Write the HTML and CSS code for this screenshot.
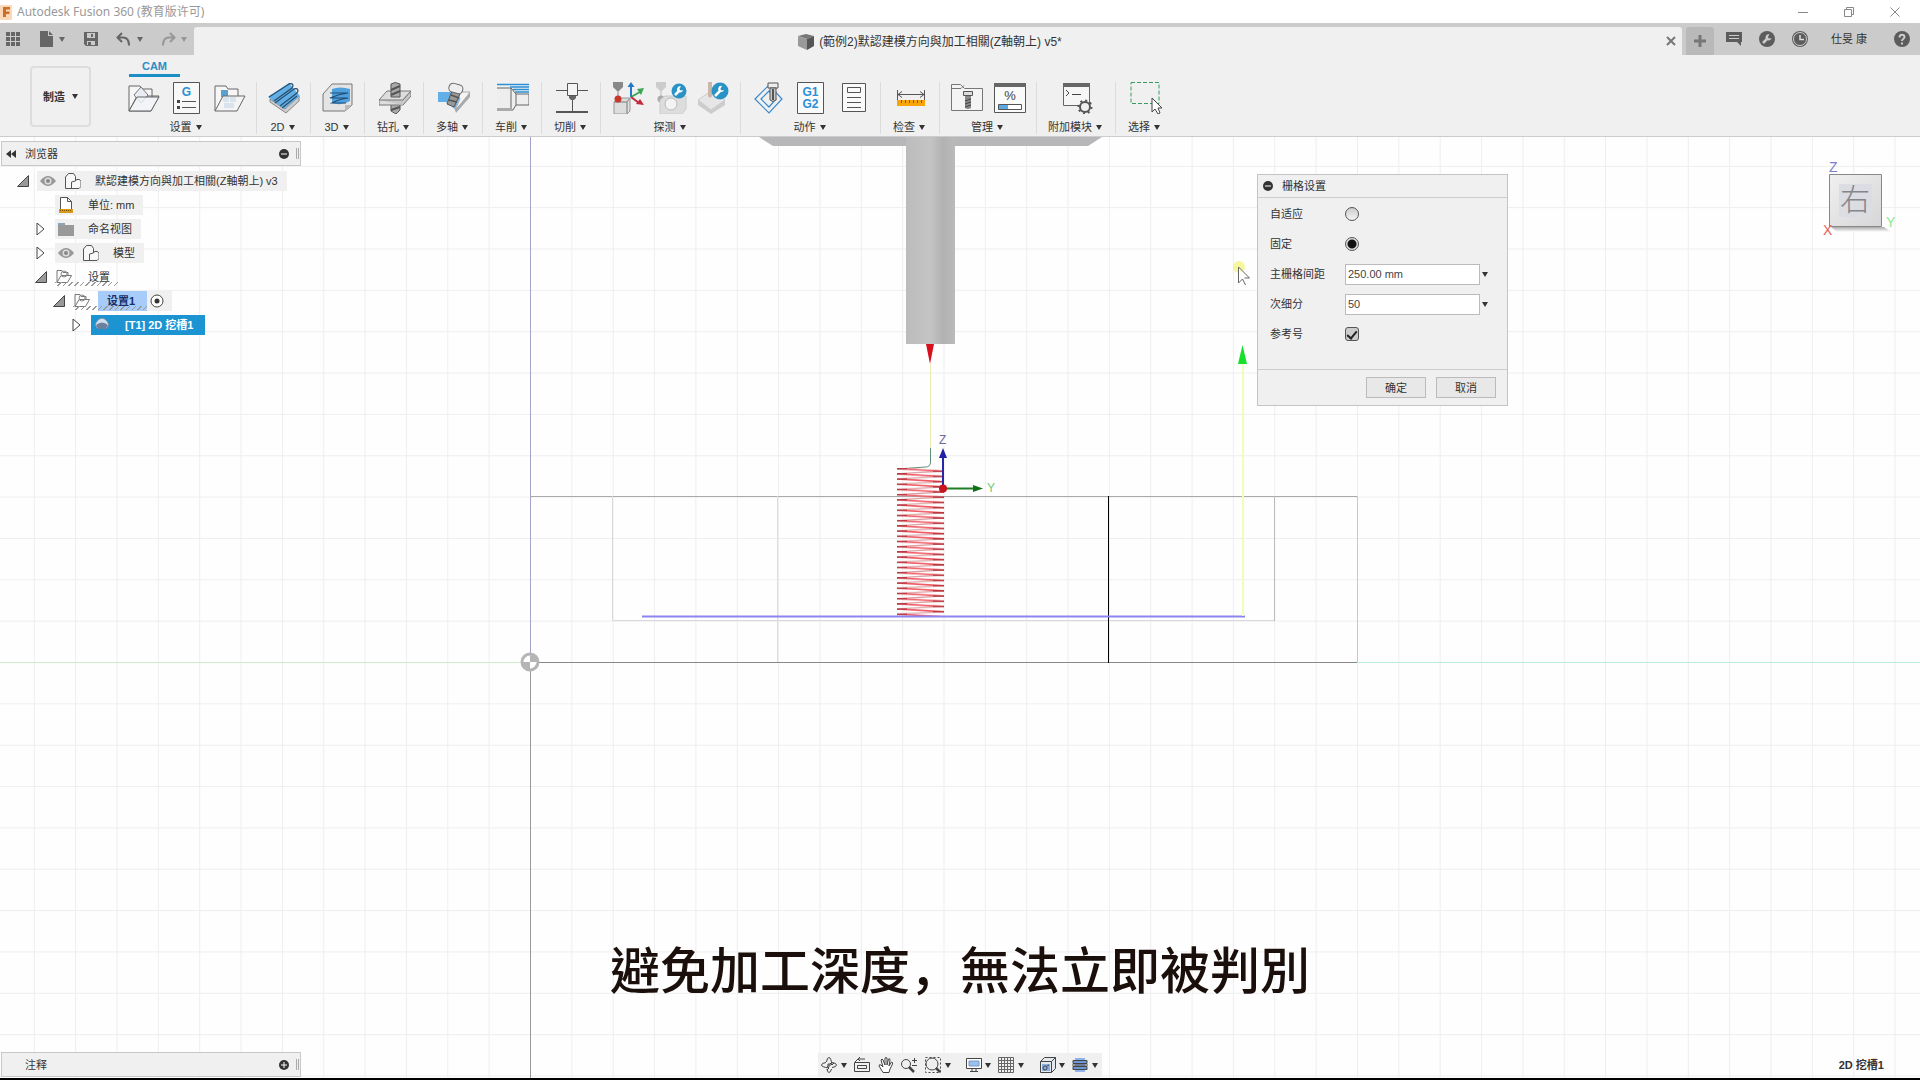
FILE: index.html
```
<!DOCTYPE html>
<html lang="zh-CN">
<head>
    <meta charset="UTF-8">
    <meta name="viewport" content="width=device-width, initial-scale=1.0">
    <title>Autodesk Fusion 360</title>
    <link rel="stylesheet" href="styles.css">
</head>
<body>
    <!-- Window title bar -->
    <header class="title-bar">
        <svg class="app-logo" viewBox="0 0 13 16"><rect width="12" height="15" y="1" rx="1" fill="#fbd9b8"/><path d="M3 13V3h7v2.500H6v2h3.500V10H6v3z" fill="#c8702c"/></svg>
        <span class="app-name">Autodesk Fusion 360 (教育版许可)</span>
        <div class="window-buttons">
            <button aria-label="Minimize"><svg viewBox="0 0 12 12"><path d="M1 6.500h10"/></svg></button>
            <button aria-label="Restore"><svg viewBox="0 0 12 12"><path d="M1.500 3.500h7v7h-7zM3.500 3.500v-2h7v7h-2"/></svg></button>
            <button aria-label="Close"><svg viewBox="0 0 12 12"><path d="M1.500 1.500l9 9M10.500 1.500l-9 9"/></svg></button>
        </div>
    </header>

    <!-- Quick access and document tab -->
    <div class="tab-bar">
        <div class="quick-access">
            <button aria-label="Data panel"><svg viewBox="0 0 16 16"><path d="M1 1h4v4H1zM6 1h4v4H6zM11 1h4v4h-4zM1 6h4v4H1zM6 6h4v4H6zM11 6h4v4h-4zM1 11h4v4H1zM6 11h4v4H6zM11 11h4v4h-4z"/></svg></button>
            <button aria-label="File"><svg viewBox="0 0 16 16"><path d="M2 0h8v5h5v11H2zM11 0l4 4h-4z"/></svg><i class="caret"></i></button>
            <button aria-label="Save"><svg viewBox="0 0 16 16"><path d="M1 1h14v14H3l-2-2zM4 2v5h8V2zM4 10v4h8v-4z" fill-rule="evenodd"/><path d="M8 3h2v3H8zM5 11h3v3H5z"/></svg></button>
            <button aria-label="Undo"><svg viewBox="0 0 16 16"><path d="M6 2L1.500 6.500 6 11M2 6.500h5q6 0 6 8" class="arrow"/></svg><i class="caret"></i></button>
            <button class="dim" aria-label="Redo"><svg viewBox="0 0 16 16"><path d="M10 2l4.500 4.500L10 11M14 6.500H9q-6 0-6 8" class="arrow"/></svg><i class="caret"></i></button>
        </div>
        <div class="doc-tab">
            <div class="doc-title">
                <svg viewBox="0 0 16 16"><path d="M0 2l8-2 8 2-7 3z" fill="#777"/><path d="M0 2l9 3v11l-9-4z" fill="#999"/><path d="M9 5l7-3v10l-7 4z" fill="#555"/></svg>
                <span>(範例2)默認建模方向與加工相關(Z軸朝上) v5*</span>
            </div>
            <button class="doc-close" aria-label="Close document"><svg viewBox="0 0 10 10"><path d="M1 1l8 8M9 1L1 9"/></svg></button>
        </div>
        <button class="new-tab" aria-label="New tab"><svg viewBox="0 0 14 14"><path d="M7 1v12M1 7h12"/></svg></button>
        <div class="account">
            <button aria-label="Comments"><svg viewBox="0 0 16 16"><path d="M0 1h16v10h-1v4l-4-4H0z"/><path d="M3 4.500h10M3 7.500h10" stroke="#ccc"/></svg></button>
            <button aria-label="Extensions"><svg viewBox="0 0 16 16"><circle cx="8" cy="8" r="8"/><path d="M4 12l4.500-4.500" stroke="#ccc" stroke-width="2.500"/><path d="M10.500 3.500a3 3 0 1 0 2 3.500L10 7.500 8.800 6z" fill="#ccc"/></svg></button>
            <button aria-label="Job status"><svg viewBox="0 0 16 16"><circle cx="8" cy="8" r="8"/><circle cx="8" cy="8" r="6.500" fill="none" stroke="#ccc"/><path d="M8 4v4.500h4" stroke="#ddd" stroke-width="1.500" fill="none"/></svg></button>
            <a class="user" href="#">仕旻 康</a>
            <button aria-label="Help"><svg viewBox="0 0 16 16"><circle cx="8" cy="8" r="8"/><path d="M5.500 6.500c0-4 5-3.500 5-.500 0 2-2.500 1.500-2.500 4M8 11.500v2" stroke="#ccc" stroke-width="2" fill="none"/></svg></button>
        </div>
    </div>

    <!-- Ribbon -->
    <div class="ribbon">
        <button class="workspace">制造<i class="caret"></i></button>
        <div class="ribbon-main">
            <a class="ribbon-tab" href="#">CAM</a>
            <div class="groups">
                <div class="group">
                    <div class="icons">
                        <svg viewBox="0 0 32 32"><path d="M1 29V4h11l2 3h10v8M1 29L9 14h22l-8 15z" fill="#f6f6f6" stroke="#666"/><path d="M6 13l7-8 7 8-7 8z" fill="#e9eef4" stroke="#777"/><path d="M1 29L9 15h22l-8 14z" fill="#f1f4f8cc" stroke="#666"/></svg>
                        <svg viewBox="0 0 32 32"><path d="M2.500.500h26v31h-26z" fill="#f8f8f8" stroke="#555"/><text x="15.500" y="14" class="g-code">G</text><path d="M11 19.500h14M11 25.500h14" stroke="#555"/><path d="M6 18h3v3H6zM6 24h3v3H6z" fill="#444"/></svg>
                        <svg viewBox="0 0 32 32"><path d="M1 29V4h11l2 3h10v8" fill="#f6f6f6" stroke="#666"/><path d="M7 8h7v7H7z" fill="#5b9fce"/><path d="M1 29L9 14h22l-8 15z" fill="#f4f4f4" stroke="#666"/><path d="M9 15h6v5H9zM16 15h6v5h-6zM10 21h10v5H10z" fill="#d8e3ee"/></svg>
                    </div>
                    <button class="group-label">设置<i class="caret"></i></button>
                </div>
                <div class="group narrow">
                    <div class="icons">
                        <svg viewBox="0 0 32 32"><path d="M2 20l16 11 13-12V14L17 27 2 17z" fill="#ccc" stroke="#888"/><path d="M0 15L21 1l11 13-16 13z" fill="#62aee6"/><path d="M1 15L21 2c4-1 5 1 3 4L6 19M7 21L26 7c4-1 5 1 3 4L12 24M14 26l15-12" fill="none" stroke="#27506f" stroke-width="1.300"/></svg>
                    </div>
                    <button class="group-label">2D<i class="caret"></i></button>
                </div>
                <div class="group narrow">
                    <div class="icons">
                        <svg viewBox="0 0 32 32"><path d="M1 29V12L10 2h20v21l-7 6z" fill="#e4e4e4" stroke="#777"/><path d="M10 7q8-3 18 0v12q-8 5-18 2z" fill="#4e9fdc"/><path d="M8 11h18q-9 1-18 5h18q-9 1-16 5h14" fill="none" stroke="#1f4f76" stroke-width="1.200"/><path d="M23 29v-6h7" fill="#bbb"/></svg>
                    </div>
                    <button class="group-label">3D<i class="caret"></i></button>
                </div>
                <div class="group">
                    <div class="icons">
                        <svg viewBox="0 0 32 32"><path d="M12 20h9v8l-4 4-5-3z" fill="#aaa" stroke="#555"/><path d="M0 18L8 9h24l-8 9v5H0z" fill="#ddd" stroke="#777"/><path d="M0 18h24L32 9v5l-8 9" fill="#c8c8c8" stroke="#777"/><path d="M12 2q4-3 9 0v13h-9z" fill="#aaa" stroke="#555"/><path d="M12 8l9-4M12 13l9-4M12 28l9-3" stroke="#555" stroke-width="2"/></svg>
                    </div>
                    <button class="group-label">钻孔<i class="caret"></i></button>
                </div>
                <div class="group">
                    <div class="icons">
                        <svg viewBox="0 0 32 32"><path d="M0 10h12l10 6-5 11-9-7H0z" fill="#62aee6"/><path d="M20 12l2-2h10l-4 7-11 11 5-11z" fill="#f4f4f4" stroke="#aaa"/><path d="M17 28l15-18v5L18 31z" fill="#aaa"/><path d="M14 9l8 3-6 13-7-3z" fill="#999" stroke="#555"/><path d="M11 18l8 2M13 13l8 3" stroke="#555" stroke-width="1.500"/><rect x="11" y="2" width="14" height="9" rx="4" transform="rotate(15 18 6)" fill="#eee" stroke="#666"/></svg>
                    </div>
                    <button class="group-label">多轴<i class="caret"></i></button>
                </div>
                <div class="group">
                    <div class="icons">
                        <svg viewBox="0 0 32 32"><path d="M0 6h14l5 6h13v11H19l-3 5H0z" fill="#eee"/><path d="M0 6h14l5 6v11l-3 5M14 6v22M19 12h13v11H19M0 28h16" fill="none" stroke="#666"/><path d="M0 27h15" stroke="#aaa" stroke-width="2"/><path d="M0 2.500h32M13 5h19M16 7.500h16M18 10h14" stroke="#2a8fd6" stroke-width="1.500"/></svg>
                    </div>
                    <button class="group-label">车削<i class="caret"></i></button>
                </div>
                <div class="group">
                    <div class="icons">
                        <svg viewBox="0 0 32 32"><path d="M0 8.500h32M16.500 17v12" stroke="#555"/><path d="M11.500 1.500h10v12h-10z" fill="#f4f4f4" stroke="#555"/><path d="M13 14h7v2l-2 2h-3l-2-2z" fill="#666"/><path d="M0 30h32" stroke="#555" stroke-width="2"/></svg>
                    </div>
                    <button class="group-label">切削<i class="caret"></i></button>
                </div>
                <div class="group">
                    <div class="icons">
                        <svg viewBox="0 0 32 32"><path d="M1 0h10v5L7 9H5L1 5z" fill="#888"/><path d="M6 9v8" stroke="#888"/><path d="M2 20h13v12H2zM2 20l4-4h12l-3 4zM15 20l3-4v13l-3 3z" fill="#ddd" stroke="#999"/><circle cx="6" cy="17" r="3.500" fill="#c8372b"/><path d="M19 15V4" stroke="#2179c8" stroke-width="2"/><path d="M15.500 5L19 0l3.500 5z" fill="#2179c8"/><path d="M19 15l9-5" stroke="#3aa655" stroke-width="2"/><path d="M25 7l7-1-3 7z" fill="#3aa655"/><path d="M19 15l8 6" stroke="#c6283c" stroke-width="2"/><path d="M28 17l4 6-8-1z" fill="#c6283c"/></svg>
                        <svg viewBox="0 0 32 32"><path d="M1 0h10v5L7 9H5L1 5z" fill="#ccc"/><path d="M6 9v8" stroke="#bbb"/><circle cx="6" cy="17" r="3.500" fill="#aaa"/><path d="M5 18l5-4h21v13l-4 5H5z" fill="#ddd" stroke="#ccc"/><circle cx="16" cy="22" r="6" fill="#f3f3f3" stroke="#bbb"/><circle cx="24" cy="9" r="7.500" fill="#2a93c6"/><path d="M20 13l4-4" stroke="#fff" stroke-width="2.500"/><path d="M26 4.500a3 3 0 1 0 2 3.500l-2.500.500-1.200-1.500z" fill="#fff"/></svg>
                        <svg viewBox="0 0 32 32"><path d="M0 18l13-9 14 9-14 10z" fill="#e6e6e6" stroke="#ccc"/><path d="M0 18v5l13 9 14-9v-5L13 28z" fill="#ccc"/><path d="M10 0v14q2 3 4 0V0" fill="#ccb6aa"/><circle cx="22" cy="9" r="8.500" fill="#2a93c6"/><path d="M17 14l5-5" stroke="#fff" stroke-width="2.500"/><path d="M24 4a3 3 0 1 0 2 4l-2.500.500L22.300 7z" fill="#fff"/></svg>
                    </div>
                    <button class="group-label">探测<i class="caret"></i></button>
                </div>
                <div class="group">
                    <div class="icons">
                        <svg viewBox="0 0 32 32"><path d="M3 17L17 3l13 14-13 14zM9 17l8-8 7 8-7 8z" fill="none" stroke="#3c88c8" stroke-width="1.200"/><path d="M16 1h10v5H16z" fill="#eee" stroke="#555" /><path d="M18 6h6v12q-3 3-6 0z" fill="#ccc" stroke="#555"/><path d="M21 7v11" stroke="#555" stroke-width="2"/></svg>
                        <svg viewBox="0 0 32 32"><path d="M2.500.500h26v31h-26z" fill="#fafafa" stroke="#555"/><text x="15.500" y="14" class="g-code">G1</text><text x="15.500" y="26" class="g-code">G2</text></svg>
                        <svg viewBox="0 0 32 32"><path d="M4.500 1.500h23v28h-23z" fill="#fafafa" stroke="#555"/><path d="M9.500 5.500h13v5h-13zM9 15.500h14M9 20.500h14M9 25.500h14" fill="none" stroke="#555"/></svg>
                    </div>
                    <button class="group-label">动作<i class="caret"></i></button>
                </div>
                <div class="group">
                    <div class="icons">
                        <svg viewBox="0 0 32 32"><path d="M2.500 8v10M29.500 8v10M3 12.500h26M7 9.500l-4 3 4 3M25 9.500l4 3-4 3" fill="none" stroke="#555"/><path d="M2 18h28v6H2z" fill="#f6a50c"/><path d="M6.500 18v3M10.500 18v3M14.500 18v3M18.500 18v3M22.500 18v3M26.500 18v3" stroke="#8a5c00"/></svg>
                    </div>
                    <button class="group-label">检查<i class="caret"></i></button>
                </div>
                <div class="group">
                    <div class="icons">
                        <svg viewBox="0 0 32 32"><path d="M.500 28.500v-26h9l4 4h18v22z" fill="#f4f4f4" stroke="#777"/><path d="M0 6.500h10l3-3" fill="none" stroke="#777"/><path d="M12.500 9.500h9v4h-9z" fill="#ddd" stroke="#555"/><path d="M14 14h6v12q-3 2-6 0z" fill="#888"/><path d="M14 19l6-2M14 22l6-2M14 25l6-2" stroke="#444"/></svg>
                        <svg viewBox="0 0 32 32"><path d="M.500 1.500h31v29H.500z" fill="#fafafa" stroke="#555"/><path d="M0 1h32v4H0z" fill="#666"/><text x="16" y="18" class="percent">%</text><path d="M4.500 22.500h23v5h-23z" fill="#fff" stroke="#555"/><path d="M5 23h9v4H5z" fill="#5aa9e2"/></svg>
                    </div>
                    <button class="group-label">管理<i class="caret"></i></button>
                </div>
                <div class="group">
                    <div class="icons">
                        <svg viewBox="0 0 32 32"><path d="M2.500 2.500h26v21h-26z" fill="#f6f6f6" stroke="#666"/><path d="M2 1h27v4H2z" fill="#666"/><path d="M5 8l3 3-3 3M11 12.500h9" fill="none" stroke="#444"/><circle cx="24" cy="25" r="5" fill="#f0f0f0" stroke="#555" stroke-width="2"/><circle cx="24" cy="25" r="6.500" fill="none" stroke="#555" stroke-width="2" stroke-dasharray="2 3"/></svg>
                    </div>
                    <button class="group-label">附加模块<i class="caret"></i></button>
                </div>
                <div class="group">
                    <div class="icons">
                        <svg viewBox="0 0 32 32"><path d="M1 .500h28v21H1z" fill="none" stroke="#3a9c62" stroke-dasharray="4 2"/><path d="M22 16v14l3-3 3 5 2-1-2-5h4z" fill="#fff" stroke="#444"/></svg>
                    </div>
                    <button class="group-label">选择<i class="caret"></i></button>
                </div>
            </div>
        </div>
    </div>

    <!-- Modelling viewport -->
    <main class="viewport">
        <svg class="scene" viewBox="0 137 1920 941" preserveAspectRatio="xMidYMin slice">
            <defs>
                <pattern id="grid" x="530" y="662" width="41.350" height="41.350" patternUnits="userSpaceOnUse">
                    <path d="M0 .500h42M.500 0v42" stroke="#eee"/>
                </pattern>
                <pattern id="helix" x="897" y="467" width="47" height="5.200" patternUnits="userSpaceOnUse">
                    <path d="M47 4.200L0 6.800M47 -1L0 1.600" stroke="#d89a9e" stroke-width="1.200"/>
                    <path d="M0 1.600L47 4.200" stroke="#f05560" stroke-width="1.600"/>
                    <path d="M0 1.600h10M36 4.200h11" stroke="#b83a42" stroke-width="1.500"/>
                </pattern>
                <linearGradient id="shaft">
                    <stop offset="0" stop-color="#bcbcbc"/>
                    <stop offset=".5" stop-color="#c4c4c4"/>
                    <stop offset=".75" stop-color="#b2b2b2"/>
                    <stop offset="1" stop-color="#bababa"/>
                </linearGradient>
            </defs>
            <rect y="137" width="1920" height="941" fill="url(#grid)"/>

            <!-- World axes -->
            <path d="M0 662.500h530" stroke="#cdeccd"/>
            <path d="M1357 662.500h563" stroke="#b8ecd8"/>
            <path d="M530.500 137v525" stroke="#a3a3cc"/>
            <path d="M530.500 662v416" stroke="#999"/>

            <!-- Stock and part outline -->
            <path d="M530 496.500h827" stroke="#aaa"/>
            <path d="M530 662.500h827" stroke="#888"/>
            <path d="M612.500 496v124.500h661.500" fill="none" stroke="#d9d9d9"/>
            <path d="M777.500 496v166" stroke="#dcdcdc"/>
            <path d="M1274.500 496v125" stroke="#bbb"/>
            <path d="M1357.500 496v166" stroke="#c8c8c8"/>
            <path d="M1108.500 496v167" stroke="#000"/>

            <!-- Tool holder and cutter -->
            <path d="M759 137h343l-14 9H773z" fill="#b7b7b9"/>
            <path d="M906 137h49v207h-49z" fill="url(#shaft)"/>
            <path d="M926 344h8l-4 20z" fill="#d80f1c"/>

            <!-- Toolpath -->
            <path d="M930.500 364v84" stroke="#e9edb4"/>
            <path d="M930.500 448v14q0 5-5 5l-28 2" fill="none" stroke="#5f8f78"/>
            <rect x="897" y="468" width="47" height="148" fill="url(#helix)"/>
            <path d="M642 616.500h603" stroke="#8c84f0" stroke-width="2"/>
            <path d="M1243 364v252" stroke="#f0ffb8" stroke-width="2"/>
            <path d="M1238 364l4.500-19 4.500 19z" fill="#16e02c"/>

            <!-- Setup origin -->
            <path d="M943 488v-34" stroke="#2a26a8" stroke-width="2"/>
            <path d="M939 458l4-10 4 10z" fill="#2320a8"/>
            <path d="M943 488.500h32" stroke="#1f7d22" stroke-width="2"/>
            <path d="M973 485l10 3.500-10 3.500z" fill="#127016"/>
            <circle cx="943" cy="488.500" r="4" fill="#c8141e"/>
            <text x="939" y="444" class="axis-z">Z</text>
            <text x="987" y="492" class="axis-y">Y</text>

            <!-- World origin -->
            <circle cx="530" cy="662" r="8" fill="#fff" stroke="#b5b5b5" stroke-width="3"/>
            <path d="M530 655v7h7a7 7 0 0 0-7-7zM530 669v-7h-7a7 7 0 0 0 7 7z" fill="#b5b5b5"/>

            <!-- Mouse pointer -->
            <circle cx="1239" cy="267" r="6" fill="#eef03a" opacity=".5"/>
            <path d="M1238.500 267v16l4-4 3 6M1238.500 267l11 11h-5" fill="#fff" stroke="#666"/>
        </svg>

        <!-- Browser panel -->
        <section class="browser">
            <div class="panel-bar">
                <svg class="collapse" viewBox="0 0 10 8"><path d="M5 0v8L0 4zM10 0v8L5 4z" fill="#333"/></svg>
                <span class="panel-name">浏览器</span>
                <button class="round" aria-label="Hide browser"><svg viewBox="0 0 10 10"><circle cx="5" cy="5" r="5"/><path d="M2 5h6"/></svg></button>
                <i class="grip"></i>
            </div>
            <ul class="tree">
                <li class="level-0">
                    <svg class="twist" viewBox="0 0 12 12"><path d="M11.500.500v11H.500z" fill="#999" stroke="#444"/></svg>
                    <div class="node">
                        <svg class="eye" viewBox="0 0 16 16"><path d="M0 8q8-10 16 0-8 10-16 0z" fill="#999"/><circle cx="8" cy="8" r="3.500" fill="#ddd"/><circle cx="8" cy="8" r="2" fill="#888"/></svg>
                        <svg viewBox="0 0 16 16"><path d="M.500 15.500V4l3-3.500h5l2 3V8l1-1.500h3l1.500 2v5l-2 2zM6.500 15V9l4-1" fill="#f8f8f8" stroke="#555"/></svg>
                        <span>默認建模方向與加工相關(Z軸朝上) v3</span>
                    </div>
                </li>
                <li class="level-1">
                    <i class="twist"></i>
                    <div class="node">
                        <svg viewBox="0 0 16 16"><path d="M2.500 12V.500h7l4 4V12" fill="#fff" stroke="#555"/><path d="M9.500.500v4h4" fill="none" stroke="#555"/><path d="M1 12h14v4H1z" fill="#d99a1c"/><path d="M2 13.500h12" stroke="#7a5300" stroke-dasharray="1 1"/></svg>
                        <span>单位: mm</span>
                    </div>
                </li>
                <li class="level-1">
                    <svg class="twist" viewBox="0 0 12 12"><path d="M2 0l7 6-7 6z" fill="#fff" stroke="#444"/></svg>
                    <div class="node">
                        <svg viewBox="0 0 16 16"><path d="M0 4h16v11H0z" fill="#999"/><path d="M0 2h7v2H0z" fill="#8fa3b8"/></svg>
                        <span>命名视图</span>
                    </div>
                </li>
                <li class="level-1">
                    <svg class="twist" viewBox="0 0 12 12"><path d="M2 0l7 6-7 6z" fill="#fff" stroke="#444"/></svg>
                    <div class="node">
                        <svg class="eye" viewBox="0 0 16 16"><path d="M0 8q8-10 16 0-8 10-16 0z" fill="#999"/><circle cx="8" cy="8" r="3.500" fill="#ddd"/><circle cx="8" cy="8" r="2" fill="#888"/></svg>
                        <svg viewBox="0 0 16 16"><path d="M.500 15.500V4l3-3.500h5l2 3V8l1-1.500h3l1.500 2v5l-2 2zM6.500 15V9l4-1" fill="#f8f8f8" stroke="#555"/></svg>
                        <span>模型</span>
                    </div>
                </li>
                <li class="level-1">
                    <svg class="twist" viewBox="0 0 12 12"><path d="M11.500.500v11H.500z" fill="#999" stroke="#444"/></svg>
                    <div class="node hatched">
                        <svg viewBox="0 0 16 16"><path d="M1 13.500V1.500h5l1 2h5v3M1 13.500l4-7h10.500l-4 7z" fill="none" stroke="#777"/><circle cx="8" cy="5" r="3" fill="none" stroke="#888"/></svg>
                        <span>设置</span>
                    </div>
                </li>
                <li class="level-2">
                    <svg class="twist" viewBox="0 0 12 12"><path d="M11.500.500v11H.500z" fill="#999" stroke="#444"/></svg>
                    <div class="node hatched setup">
                        <svg viewBox="0 0 16 16"><path d="M1 13.500V1.500h5l1 2h5v3M1 13.500l4-7h10.500l-4 7z" fill="none" stroke="#777"/><circle cx="8" cy="5" r="3" fill="none" stroke="#888"/></svg>
                        <span>设置1</span>
                    </div>
                    <div class="node active-mark">
                        <svg viewBox="0 0 16 16"><circle cx="8" cy="8" r="6" fill="#fff" stroke="#444"/><circle cx="8" cy="8" r="2.500" fill="#333"/></svg>
                    </div>
                </li>
                <li class="level-3">
                    <svg class="twist" viewBox="0 0 12 12"><path d="M2 0l7 6-7 6z" fill="#fff" stroke="#444"/></svg>
                    <div class="node selected">
                        <svg viewBox="0 0 16 16"><path d="M1 8q2-6 7-7 5 1 7 7l-3 4q-4-3-8 0z" fill="#cfe0ee" stroke="#6b8aa8"/><path d="M2 8q6-5 12 0l-3 5q-3-3-6 0z" fill="#6c7f9c"/></svg>
                        <span>[T1] 2D 挖槽1</span>
                    </div>
                </li>
            </ul>
        </section>

        <!-- Grid settings dialog -->
        <form class="dialog">
            <div class="dialog-head">
                <svg class="round" viewBox="0 0 10 10"><circle cx="5" cy="5" r="5"/><path d="M2 5h6"/></svg>
                <span>栅格设置</span>
            </div>
            <div class="dialog-body">
                <div class="field">
                    <label for="adaptive">自适应</label>
                    <input type="radio" name="mode" id="adaptive">
                </div>
                <div class="field">
                    <label for="fixed">固定</label>
                    <input type="radio" name="mode" id="fixed" checked>
                </div>
                <div class="field">
                    <label for="spacing">主栅格间距</label>
                    <input type="text" id="spacing" value="250.00 mm">
                    <button type="button" aria-label="Spacing values"><i class="caret"></i></button>
                </div>
                <div class="field">
                    <label for="subdivisions">次细分</label>
                    <input type="text" id="subdivisions" value="50">
                    <button type="button" aria-label="Subdivision values"><i class="caret"></i></button>
                </div>
                <div class="field">
                    <label for="numbers">参考号</label>
                    <input type="checkbox" id="numbers" checked>
                </div>
            </div>
            <div class="dialog-foot">
                <button type="button">确定</button>
                <button type="button">取消</button>
            </div>
        </form>

        <!-- View cube -->
        <div class="view-cube">
            <svg viewBox="0 0 76 80">
                <defs>
                    <linearGradient id="shade" x2="0" y2="1">
                        <stop offset="0" stop-color="#aaa"/>
                        <stop offset="1" stop-color="#fff"/>
                    </linearGradient>
                    <linearGradient id="face" x2="1" y2="1">
                        <stop offset="0" stop-color="#f0f0f0"/>
                        <stop offset="1" stop-color="#d6d6d8"/>
                    </linearGradient>
                </defs>
                <path d="M8 67h53l7 5H14z" fill="url(#shade)"/>
                <path d="M6.500 14.500h52v52h-52z" fill="url(#face)" stroke="#888"/>
                <path d="M16 24h33v33H16z" fill="#dcdde2"/>
                <text x="32" y="50" class="face-name">右</text>
                <text x="6" y="12" class="cube-z">Z</text>
                <text x="0" y="75" class="cube-x">X</text>
                <text x="63" y="67" class="cube-y">Y</text>
            </svg>
        </div>

        <p class="caption" lang="zh-TW">避免加工深度<span class="comma" lang="zh-CN">，</span>無法立即被判別</p>

        <!-- Comments panel -->
        <section class="comments panel-bar">
            <span class="panel-name">注释</span>
            <button class="round" aria-label="Show comments"><svg viewBox="0 0 10 10"><circle cx="5" cy="5" r="5"/><path d="M2 5h6M5 2v6"/></svg></button>
            <i class="grip"></i>
        </section>

        <!-- Navigation bar -->
        <nav class="nav-bar">
            <button aria-label="Orbit"><svg viewBox="0 0 16 16"><path d="M5 5.500Q.500 6 .500 8T8 11l-2-2M8 11l-2 2M11 10.500q4.500-.500 4.500-2.500T11 5.500M5.500 5Q6 .500 8 .500T11 8l-2-2M11 8l2-2M6 12q.500 3.500 2 3.500t2.500-3.500M8 6v4M6 8h4"/></svg><i class="caret"></i></button>
            <button aria-label="Look at"><svg viewBox="0 0 16 16"><path d="M.500 5.500h15v9H.500zM3.500 8.500h9v3h-9zM1 5l3-3h7M4 2l2-2M4 2l2 2"/></svg></button>
            <button aria-label="Pan"><svg viewBox="0 0 16 16"><path d="M5 15.500L1 9q0-2 2-1l2 2L3 3q1-2 2 0l2 5V1q1-1 2 0v7l1.500-6q1.500-1 1.500 1l-1 6 2.500-4q1.500 0 1 2L12 12l-1 3.500z" fill="#fff"/></svg></button>
            <button aria-label="Zoom"><svg viewBox="0 0 16 16"><circle cx="5" cy="7" r="4.500"/><path d="M8 10l5 5" stroke-width="2.500"/><path d="M11 3.500h5M13.500 1v5M11 8.500h5"/></svg></button>
            <button aria-label="Fit"><svg viewBox="0 0 16 16"><path d="M.500.500h15v15H.500z" stroke-dasharray="2 2"/><circle cx="7" cy="7" r="6" fill="#eee"/><path d="M11 11l4 4" stroke-width="2.500"/></svg><i class="caret"></i></button>
            <button class="gap" aria-label="Display settings"><svg viewBox="0 0 16 16"><path d="M.500 1.500h15v10H.500z" fill="#fff"/><path d="M3 4h10v5H3z" fill="#9cc0ee" stroke="#7799c8"/><path d="M6 12v2.500M10 12v2.500M4 14.500h8"/></svg><i class="caret"></i></button>
            <button aria-label="Grid and snaps"><svg viewBox="0 0 16 16"><path d="M.500.500h15v15H.500zM3.500 0v16M6.500 0v16M9.500 0v16M12.500 0v16M0 3.500h16M0 6.500h16M0 9.500h16M0 12.500h16" stroke="#666"/></svg><i class="caret"></i></button>
            <button class="gap" aria-label="Viewports"><svg viewBox="0 0 16 16"><path d="M.500 4.500l4-4h11v11l-4 4H.500z" fill="#e4e9f0"/><path d="M.500 4.500h11v11M11.500 4.500l4-4"/><path d="M2 7h8v7H2z" fill="#8aaede" stroke="none"/><circle cx="5" cy="11" r="2"/><path d="M7 9l2-1"/></svg><i class="caret"></i></button>
            <button aria-label="Sections"><svg viewBox="0 0 16 16"><path d="M3 1h10v14H3z" fill="#8fb4ea" stroke="none"/><path d="M1 3.500h14v3H1zM1 9.500h14v3H1z" fill="#6d97d6"/><path d="M0 8h16"/></svg><i class="caret"></i></button>
        </nav>

        <span class="status">2D 挖槽1</span>
    </main>
</body>
</html>
```
FILE: styles.css
```
/* General styles */
* {
    box-sizing: border-box;
}

body {
    margin: 0;
    height: 100vh;
    display: flex;
    flex-direction: column;
    overflow: hidden;
    background: #000;
    color: #333;
    font-family: "Liberation Sans", "Noto Sans CJK SC", sans-serif;
    font-size: 11px;
    line-height: 16px;
}

button {
    display: flex;
    align-items: center;
    padding: 0;
    border: none;
    background: none;
    color: inherit;
    font: inherit;
}

svg {
    display: block;
    flex: none;
}

a {
    color: inherit;
    text-decoration: none;
}

.caret {
    flex: none;
    border: 3px solid transparent;
    border-top: 5px solid #333;
    border-bottom: none;
}

/* Title bar */
.title-bar {
    flex: none;
    height: 23px;
    display: flex;
    align-items: center;
    background: #fff;
    color: #999;
}

.app-logo {
    width: 13px;
    height: 16px;
}

.app-name {
    margin-left: 4px;
    font-family: "Noto Sans", "Noto Sans CJK SC", sans-serif;
    font-size: 12px;
}

.window-buttons {
    display: flex;
    gap: 34px;
    margin-left: auto;
    padding-right: 19px;
}

.window-buttons svg {
    width: 12px;
    height: 12px;
    fill: none;
    stroke: #888;
}

/* Tab bar */
.tab-bar {
    flex: none;
    height: 32px;
    display: flex;
    align-items: flex-end;
    background: #cbcbcb;
}

.quick-access {
    width: 194px;
    height: 32px;
    display: flex;
    align-items: center;
    justify-content: space-between;
    padding: 0 7px 0 5px;
}

.quick-access svg {
    width: 16px;
    height: 16px;
    fill: #666;
}

.quick-access .arrow {
    fill: none;
    stroke: #666;
    stroke-width: 2;
}

.quick-access button {
    gap: 5px;
}

.quick-access .caret {
    border-top-color: #666;
}

.quick-access .dim {
    opacity: 0.5;
}

.doc-tab {
    flex: 1;
    height: 28px;
    display: flex;
    align-items: center;
    padding-right: 6px;
    border-radius: 3px 3px 0 0;
    background: #f0f0f0;
}

.doc-title {
    flex: 1;
    display: flex;
    align-items: center;
    justify-content: center;
    gap: 5px;
    padding-top: 2px;
    font-size: 12px;
}

.doc-title svg {
    width: 16px;
    height: 16px;
}

.doc-close svg {
    width: 10px;
    height: 10px;
    fill: none;
    stroke: #777;
    stroke-width: 2;
}

.new-tab {
    width: 28px;
    height: 28px;
    justify-content: center;
    margin-left: 4px;
    border-radius: 3px 3px 0 0;
    background: #b9b9b9;
}

.new-tab svg {
    width: 14px;
    height: 14px;
    stroke: #777;
    stroke-width: 3;
}

.account {
    height: 32px;
    display: flex;
    align-items: center;
    gap: 17px;
    padding: 0 10px 0 12px;
}

.account svg {
    width: 16px;
    height: 16px;
    fill: #5c5c5c;
}

.user {
    margin: 0 10px 0 6px;
}

/* Ribbon */
.ribbon {
    flex: none;
    height: 82px;
    display: flex;
    align-items: flex-start;
    border-bottom: 1px solid #ccc;
    background: #f0f0f0;
}

.workspace {
    width: 61px;
    height: 61px;
    justify-content: center;
    gap: 7px;
    margin: 11px 26px 0 30px;
    border: 2px solid #ddd;
    border-radius: 4px;
    font-weight: bold;
}

.ribbon-tab {
    display: block;
    width: 51px;
    height: 19px;
    margin: 3px 0 5px 12px;
    border-bottom: 3px solid #1c8ec6;
    color: #2a8fc4;
    font-weight: bold;
    text-align: center;
}

.groups {
    display: flex;
}

.group {
    min-width: 59px;
    height: 52px;
    display: flex;
    flex-direction: column;
    align-items: center;
    padding: 0 10px 0 11px;
    border-left: 1px solid #dcdcdc;
}

.group:first-child {
    border-left: none;
}

.group.narrow {
    min-width: 54px;
}

.icons {
    display: flex;
    gap: 11px;
}

.icons svg {
    width: 32px;
    height: 32px;
    fill: none;
}

.g-code {
    fill: #2a8fd6;
    font-size: 12px;
    font-weight: bold;
    text-anchor: middle;
}

.percent {
    fill: #444;
    font-size: 13px;
    text-anchor: middle;
}

.group-label {
    gap: 4px;
    margin: 5px 3px 0 0;
    white-space: nowrap;
}

/* Viewport */
.viewport {
    position: relative;
    flex: 1;
    min-height: 0;
    margin-bottom: 2px;
    background: #fefefe;
}

.scene {
    width: 100%;
    height: 100%;
}

.axis-z,
.axis-y {
    fill: #6b6b9c;
    font-size: 12px;
}

.axis-y {
    fill: #6ecb70;
}

/* Browser tree */
.browser {
    position: absolute;
    top: 4px;
    left: 1px;
}

.panel-bar {
    width: 300px;
    height: 25px;
    display: flex;
    align-items: center;
    border: 1px solid #c8c8c8;
    background: #f0f0f0;
}

.collapse {
    width: 10px;
    height: 8px;
    margin-left: 4px;
}

.panel-name {
    flex: 1;
    margin-left: 9px;
}

.round {
    width: 10px;
    height: 10px;
    fill: #333;
    stroke: #fff;
}

.round circle {
    stroke: none;
}

.grip {
    width: 3px;
    height: 11px;
    margin: 0 1px 0 7px;
    border: 1px solid #aaa;
    border-width: 0 1px;
}

.tree {
    margin: 3px 0 0 16px;
    padding: 0;
    list-style: none;
}

.tree li {
    height: 24px;
    display: flex;
    align-items: center;
}

.level-1 {
    padding-left: 18px;
}

.level-2 {
    padding-left: 36px;
}

.level-3 {
    padding-left: 54px;
}

.twist {
    width: 12px;
    height: 12px;
    margin-right: 8px;
}

.node {
    height: 20px;
    display: flex;
    align-items: center;
    padding: 0 9px 0 3px;
    background: #f0f0f0;
}

.node svg {
    width: 16px;
    height: 16px;
}

.node .eye {
    margin-right: 9px;
}

.node span {
    margin-left: 14px;
}

.hatched {
    position: relative;
    padding-left: 1px;
    background: none;
}

.hatched span {
    margin-left: 16px;
}

.hatched::after {
    content: "";
    position: absolute;
    right: 0;
    bottom: 1px;
    left: 0;
    height: 4px;
    background: repeating-linear-gradient(135deg, #999 0 1px, transparent 1px 4px);
}

.setup {
    padding-right: 0;
}

.setup span {
    height: 20px;
    margin-left: 8px;
    padding: 2px 12px 2px 9px;
    background: #a8ccfa;
    color: #16306a;
    font-weight: bold;
}

.active-mark {
    padding: 0 7px 0 2px;
}

.selected {
    padding-right: 12px;
    background: #1c94d2;
    color: #fff;
    font-weight: bold;
}

.selected span {
    margin-left: 15px;
}

/* Grid settings dialog */
.dialog {
    position: absolute;
    top: 37px;
    right: 412px;
    width: 251px;
    border: 1px solid #c4c4c4;
    background: #f0f0f0;
}

.dialog-head {
    height: 23px;
    display: flex;
    align-items: center;
    gap: 9px;
    padding-left: 5px;
    border-bottom: 1px solid #ccc;
}

.dialog-body {
    padding: 1px 12px 20px;
}

.field {
    height: 30px;
    display: flex;
    align-items: center;
}

.field label {
    width: 75px;
}

.field input[type="text"] {
    width: 135px;
    height: 21px;
    padding: 0 2px;
    border: 1px solid #bbb;
    background: #fff;
    color: #444;
    font: inherit;
}

.field button {
    margin-left: 2px;
}

.field input[type="radio"],
.field input[type="checkbox"] {
    appearance: none;
    width: 14px;
    height: 14px;
    margin: 0;
    border: 1px solid #555;
    background: linear-gradient(#ccc, #f4f4f4);
}

.field input[type="radio"] {
    border-radius: 50%;
}

.field input[type="radio"]:checked {
    background: radial-gradient(#111 0 4px, #ddd 5px);
}

.field input[type="checkbox"] {
    display: grid;
    place-items: center;
    border-radius: 3px;
    background: #ccc;
}

.field input[type="checkbox"]::after {
    content: "";
    width: 4px;
    height: 8px;
    border: solid #222;
    border-width: 0 2px 2px 0;
    transform: rotate(40deg);
}

.dialog-foot {
    display: flex;
    justify-content: flex-end;
    gap: 10px;
    padding: 7px 11px;
    border-top: 1px solid #ccc;
}

.dialog-foot button {
    width: 60px;
    height: 21px;
    justify-content: center;
    border: 1px solid #bbb;
    background: #e8e8e8;
}

/* View cube */
.view-cube {
    position: absolute;
    top: 23px;
    right: 21px;
}

.view-cube svg {
    width: 76px;
    height: 80px;
}

.face-name {
    fill: #85858c;
    font-size: 30px;
    font-weight: 300;
    text-anchor: middle;
}

.cube-z,
.cube-x,
.cube-y {
    fill: #7d7dd0;
    font-size: 14px;
}

.cube-x {
    fill: #e0625c;
}

.cube-y {
    fill: #8aea8a;
}

/* Caption */
.caption {
    position: absolute;
    right: 0;
    bottom: 75px;
    left: 0;
    margin: 0;
    color: #1a0f0a;
    font-family: "Noto Sans CJK TC", sans-serif;
    font-size: 50px;
    font-weight: 500;
    line-height: 72px;
    text-align: center;
}

.comma {
    font-family: "Noto Sans CJK SC", sans-serif;
}

/* Bottom bars */
.comments {
    position: absolute;
    bottom: 1px;
    left: 1px;
}

.comments .panel-name {
    margin-left: 23px;
}

.nav-bar {
    position: absolute;
    right: 0;
    bottom: 1px;
    left: 0;
    width: 284px;
    height: 24px;
    display: flex;
    align-items: center;
    justify-content: space-between;
    margin: 0 auto;
    padding: 0 4px 0 3px;
    background: #f0f0f0;
}

.nav-bar svg {
    width: 16px;
    height: 16px;
    fill: none;
    stroke: #444;
}

.nav-bar button {
    gap: 4px;
}

.nav-bar .gap {
    gap: 3px;
    margin-left: 8px;
}

.status {
    position: absolute;
    right: 36px;
    bottom: 5px;
    font-weight: bold;
}
```
